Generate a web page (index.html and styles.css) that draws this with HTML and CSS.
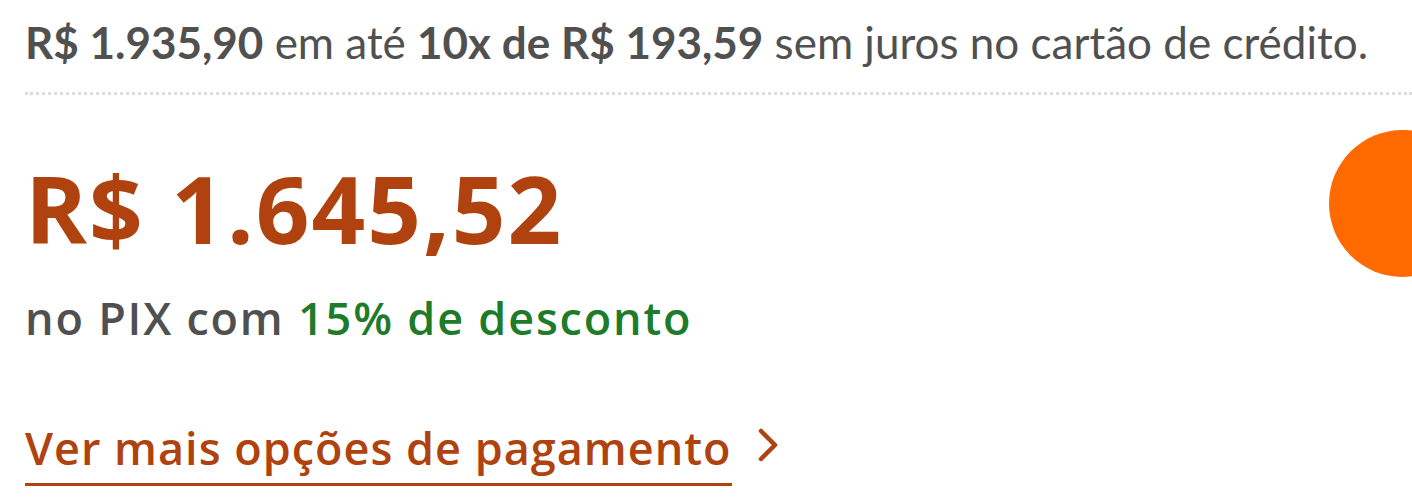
FILE: index.html
```html
<!DOCTYPE html>
<html lang="pt-BR">
<head>
    <meta charset="UTF-8">
    <title>Pagamento</title>
    <link rel="stylesheet" href="styles.css">
</head>
<body>
    <div class="price-box">
        <p class="installments"><strong>R$ 1.935,90</strong> em até <strong>10x de R$ 193,59</strong> sem juros no cartão de crédito.</p>
        <div class="divider"></div>
        <div class="pix-price">R$ 1.645,52</div>
        <p class="pix-note">no PIX com <span class="discount">15% de desconto</span></p>
        <a class="more-options" href="#">
            <span class="more-text">Ver mais opções de pagamento</span>
            <svg class="chevron" width="24" height="34" viewBox="0 0 24 34"><path d="M5 3 L19 17 L5 31" fill="none" stroke="#b0420f" stroke-width="4.5" stroke-linecap="round" stroke-linejoin="round"/></svg>
        </a>
    </div>

    <div class="float-dot"></div>
</body>
</html>
```

FILE: styles.css
```css
body {
    margin: 0;
    background: #fff;
    font-family: Lato, "Open Sans", sans-serif;
    color: #505050;
    overflow: hidden;
}

.price-box {
    padding: 14px 0 0 25px;
}

.installments {
    margin: 0;
    font-size: 44px;
    line-height: 56px;
    white-space: nowrap;
}

.divider {
    margin-top: 22px;
    border-top: 3px dotted #ddd;
}

.pix-price {
    margin-top: 63px;
    font-family: "Open Sans", sans-serif;
    font-size: 94px;
    font-weight: 700;
    letter-spacing: 2px;
    line-height: 100px;
    color: #b0420f;
}

.pix-note {
    margin: 32px 0 0;
    font-family: "Open Sans", sans-serif;
    font-size: 45px;
    font-weight: 600;
    letter-spacing: 1.8px;
    line-height: 56px;
}

.discount {
    color: #1e7b2a;
}

.more-options {
    display: inline-flex;
    align-items: flex-start;
    margin-top: 70px;
    color: #b0420f;
    font-family: "Open Sans", sans-serif;
    font-size: 45px;
    font-weight: 600;
    letter-spacing: 1px;
    text-decoration: none;
}

.more-text {
    padding-bottom: 3px;
    border-bottom: 3px solid #b0420f;
    line-height: 64px;
}

.chevron {
    margin: 12px 0 0 24px;
}

.float-dot {
    position: fixed;
    top: 130px;
    left: 1329px;
    width: 147px;
    height: 147px;
    border-radius: 50%;
    background: #ff6a00;
}
```
